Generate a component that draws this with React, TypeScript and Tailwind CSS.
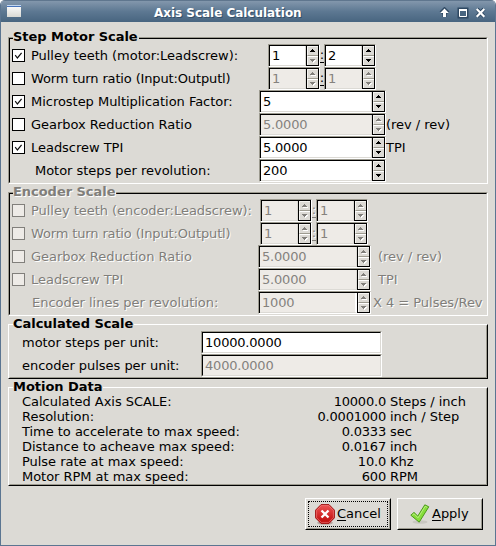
import React from "react";

type SpinProps = { value: string; off?: boolean; up?: boolean; down?: boolean; className: string; strip?: boolean };

function Arrow({ dir, off }: { dir: "up" | "down"; off: boolean }) {
  const d = dir === "up" ? "M2 0h1v1h1v1h1v1h-5v-1h1v-1h1z" : "M0 0h5v1h-1v1h-1v1h-1v-1h-1v-1h-1z";
  return (
    <svg width="6" height="4" viewBox="0 0 6 4" shapeRendering="crispEdges">
      {off && <path d={d} fill="#ffffff" transform="translate(1 1)" />}
      <path d={d} fill={off ? "#807e7a" : "#000000"} />
    </svg>
  );
}

function Spin({ value, off = false, up = !off, down = !off, className, strip = false }: SpinProps) {
  return (
    <div className={`h-[23px] shrink-0 border border-t-[#9c9a8f] border-l-[#9c9a8f] border-r-white border-b-white ${className}`}>
      <div className={`flex h-[21px] border-t border-l border-t-black border-l-black ${off ? "bg-[#eeebe7]" : "bg-white"}`}>
        <div
          className={`flex-1 border-b border-b-[#dcdad5] pl-[2px] leading-[19px] tracking-[-0.2px] ${strip ? "border-r-2 border-r-white" : "border-r border-r-[#dcdad5]"} ${off ? "text-[#85827e]" : "text-black"}`}
        >
          {value}
        </div>
        <div className="flex h-[20px] w-[13px] flex-col border-r border-b border-l border-black bg-[#dcdad5]">
          <div className="flex h-[10px] items-center justify-center border-t border-l border-b border-t-[#f5f4f1] border-l-[#f5f4f1] border-b-[#9c9a8f]">
            <Arrow dir="up" off={!up} />
          </div>
          <div className="flex h-[9px] items-center justify-center border-t border-l border-t-white border-l-[#f5f4f1]">
            <Arrow dir="down" off={!down} />
          </div>
        </div>
      </div>
    </div>
  );
}

function Check({ state }: { state: "on" | "none" | "off" }) {
  return (
    <div className={`mr-[6px] h-[13px] w-[13px] shrink-0 border ${state === "off" ? "border-[#817f7b] bg-[#eeebe7]" : "border-black bg-white"}`}>
      {state === "on" && (
        <svg width="11" height="11" viewBox="0 0 11 11">
          <path d="M2.2 5.2 L4.4 8 L8.6 2.8" fill="none" stroke="#111" strokeWidth="1.2" />
        </svg>
      )}
    </div>
  );
}

function Label({ children, className }: { children: React.ReactNode; className: string }) {
  return <div className={`shrink-0 whitespace-nowrap ${className}`}>{children}</div>;
}

function Frame({ title, sunken, off, className, children }: { title: string; sunken?: boolean; off?: boolean; className: string; children: React.ReactNode }) {
  return (
    <section
      className={`mx-[7px] shrink-0 border ${sunken ? "border-t-[#9c9a8f] border-l-[#9c9a8f] border-r-white border-b-white" : "border-t-white border-l-white border-r-black border-b-black"} ${className}`}
    >
      <div
        className={`h-full border ${sunken ? "border-t-black border-l-black border-r-[#dcdad5] border-b-[#dcdad5]" : "border-t-[#dcdad5] border-l-[#dcdad5] border-r-[#9c9a8f] border-b-[#9c9a8f]"}`}
      >
        <h2 className={`mt-[-9px] ml-[3px] h-[14px] w-fit bg-[#dcdad5] pr-px leading-[14px] font-bold tracking-[-0.04px] whitespace-nowrap ${off ? "text-[#807e7a] [text-shadow:1px_1px_white]" : ""}`}>
          {title}
        </h2>
        {children}
      </div>
    </section>
  );
}

function Row({ children }: { children: React.ReactNode }) {
  return <div className="flex h-[23px] items-center pl-[2px]">{children}</div>;
}

function Colon() {
  return <div className="flex h-[15px] w-[4px] shrink-0 justify-center overflow-hidden border-b border-current leading-[13px]">:</div>;
}

function MotionRow({ name, value, unit }: { name: string; value: string; unit: string }) {
  return (
    <div className="flex h-[15px] leading-[15px] whitespace-nowrap">
      <div className="w-[250px] pl-[12px]">{name}</div>
      <div className="w-[126px] text-right tracking-[-0.2px]">{value}</div>
      <div className="ml-[4px]">{unit}</div>
    </div>
  );
}

export default function App() {
  return (
    <div className="h-[546px] w-[496px] overflow-hidden bg-white font-['DejaVu_Sans',sans-serif] text-[13px] tracking-[-0.03px] text-black">
      <div className="flex h-full flex-col overflow-hidden rounded-t-[5px] border-x border-b border-[#5b7591] bg-[#dcdad5]">
        <header className="flex h-[22px] shrink-0 items-center border-t border-t-[#5f768e] bg-linear-to-b from-[#8397ac] via-[#5d7892] to-[#486580] pr-[9px] pl-[6px]">
          <svg className="-mt-px" width="14" height="12" viewBox="0 0 14 12" shapeRendering="crispEdges">
            <defs>
              <linearGradient id="win" x1="0" y1="0" x2="0" y2="1">
                <stop offset="0" stopColor="#fff" />
                <stop offset="1" stopColor="#d9d9d4" />
              </linearGradient>
            </defs>
            <path fill="url(#win)" d="M0 0h14v12h-14z" />
            <path fill="#c2d6ef" d="M0 0h14v1h-14z" />
            <path fill="#4773b9" d="M0 1h14v1h-14z" />
          </svg>
          <div className="mt-[3px] ml-[133px] w-[177px] text-[12px] leading-[16px] font-bold whitespace-nowrap text-white [text-shadow:1px_1px_#344f69]">
            Axis Scale Calculation
          </div>
          <svg className="mt-[2px] ml-auto" width="48" height="12" viewBox="0 0 48 12">
            <g fill="none" stroke="#2f4963" strokeWidth="4">
              <path d="M6.5 10V4M3 6l3.5-3.5L10 6M21.5 2.5h7v7h-7zM39 2l7 7.5M46 2l-7 7.5" />
            </g>
            <path d="M6.5 1.5L10.8 6H8v4H5V6H2.2z" fill="white" />
            <path d="M21.5 2.5h7v7h-7z" fill="#486580" stroke="white" strokeWidth="1" />
            <path d="M21 2h8v2h-8z" fill="white" />
            <path d="M38.7 2l7.6 7.8M46.3 2l-7.6 7.8" stroke="white" strokeWidth="2.2" />
          </svg>
        </header>

        <Frame title="Step Motor Scale" sunken className="mt-[15px] h-[147px]">
          <Row><Check state="on" /><Label className="w-[237px]">Pulley teeth (motor:Leadscrew):</Label><Spin value="1" down={false} className="w-[52px]" /><Colon /><Spin value="2" className="w-[52px]" /></Row>
          <Row><Check state="none" /><Label className="w-[237px] tracking-[-0.14px]">Worm turn ratio (Input:Outputl)</Label><Spin value="1" off className="w-[52px]" /><Colon /><Spin value="1" off className="w-[52px]" /></Row>
          <Row><Check state="on" /><Label className="w-[228px]">Microstep Multiplication Factor:</Label><Spin value="5" className="w-[127px]" /></Row>
          <Row><Check state="none" /><Label className="w-[228px]">Gearbox Reduction Ratio</Label><Spin value="5.0000" off className="w-[127px]" /><Label className="">(rev / rev)</Label></Row>
          <Row><Check state="on" /><Label className="w-[228px]">Leadscrew TPI</Label><Spin value="5.0000" className="w-[127px]" /><Label className="">TPI</Label></Row>
          <Row><Label className="ml-[23px] w-[224px]">Motor steps per revolution:</Label><Spin value="200" className="w-[127px]" /></Row>
        </Frame>

        <Frame title="Encoder Scale" sunken off className="mt-[8px] h-[124px]">
          <div className="text-[#807e7a] [text-shadow:1px_1px_white]">
            <Row><Check state="off" /><Label className="w-[229px]">Pulley teeth (encoder:Leadscrew):</Label><Spin value="1" off className="w-[52px] [text-shadow:none]" /><Colon /><Spin value="1" off className="w-[52px] [text-shadow:none]" /></Row>
            <Row><Check state="off" /><Label className="w-[229px] tracking-[-0.14px]">Worm turn ratio (Input:Outputl)</Label><Spin value="1" off className="w-[52px] [text-shadow:none]" /><Colon /><Spin value="1" off className="w-[52px] [text-shadow:none]" /></Row>
            <Row><Check state="off" /><Label className="w-[227px]">Gearbox Reduction Ratio</Label><Spin value="5.0000" off className="w-[113px] [text-shadow:none]" /><Label className="ml-[7px]">(rev / rev)</Label></Row>
            <Row><Check state="off" /><Label className="w-[227px]">Leadscrew TPI</Label><Spin value="5.0000" off className="w-[113px] [text-shadow:none]" /><Label className="ml-[7px]">TPI</Label></Row>
            <Row><Label className="ml-[20px] w-[226px]">Encoder lines per revolution:</Label><Spin value="1000" off strip className="w-[113px] [text-shadow:none]" /><Label className="ml-[2px]">X 4 = Pulses/Rev</Label></Row>
          </div>
        </Frame>

        <Frame title="Calculated Scale" className="mt-[8px] h-[55px]">
          <Row>
            <Label className="ml-[10px] w-[179px]">motor steps per unit:</Label>
            <div className="h-[23px] w-[181px] border border-t-[#9c9a8f] border-l-[#9c9a8f] border-r-white border-b-white">
              <div className="h-[21px] border border-t-black border-l-black border-r-[#dcdad5] border-b-[#dcdad5] bg-white pl-[2px] leading-[19px] tracking-[-0.2px]">10000.0000</div>
            </div>
          </Row>
          <Row>
            <Label className="ml-[10px] w-[179px]">encoder pulses per unit:</Label>
            <div className="h-[23px] w-[181px] border border-t-[#9c9a8f] border-l-[#9c9a8f] border-r-white border-b-white">
              <div className="h-[21px] border border-t-black border-l-black border-r-[#dcdad5] border-b-[#dcdad5] bg-[#eeebe7] pl-[2px] leading-[19px] tracking-[-0.2px] text-[#85827e]">4000.0000</div>
            </div>
          </Row>
        </Frame>

        <Frame title="Motion Data" className="mt-[8px] h-[99px]">
          <MotionRow name="Calculated Axis SCALE:" value="10000.0" unit="Steps / inch" />
          <MotionRow name="Resolution:" value="0.0001000" unit="inch / Step" />
          <MotionRow name="Time to accelerate to max speed:" value="0.0333" unit="sec" />
          <MotionRow name="Distance to acheave max speed:" value="0.0167" unit="inch" />
          <MotionRow name="Pulse rate at max speed:" value="10.0" unit="Khz" />
          <MotionRow name="Motor RPM at max speed:" value="600" unit="RPM" />
        </Frame>

        <footer className="mt-[12px] flex justify-end gap-[6px] pr-[12px]">
          <button className="h-[32px] w-[86px] border border-t-white border-l-white border-r-black border-b-black">
            <span className="flex h-[30px] border border-t-[#dcdad5] border-l-[#dcdad5] border-r-[#9c9a8f] border-b-[#9c9a8f] p-px">
              <span className="flex flex-1 items-center border border-dotted border-black pl-[6px]">
                <svg width="20" height="21" viewBox="0 0 20 21">
                  <defs>
                    <linearGradient id="red" x1="0" y1="0" x2="0" y2="1">
                      <stop offset="0" stopColor="#ee5555" />
                      <stop offset="1" stopColor="#bd0808" />
                    </linearGradient>
                  </defs>
                  <ellipse cx="10" cy="18.8" rx="8" ry="2" fill="#b5a5a0" />
                  <path d="M6 .6h8l5.4 5.5v7.8L14 19.4H6L.6 13.9V6.1z" fill="url(#red)" stroke="#a31515" />
                  <path d="M6.4 1.6h7.2l4.8 4.9v7L13.6 18.4H6.4L1.6 13.5v-7z" fill="none" stroke="#f08080" strokeWidth=".6" />
                  <path d="M6.5 6.5l7 7M13.5 6.5l-7 7" stroke="white" strokeWidth="2.3" />
                </svg>
                <span className="ml-[2px]"><span className="underline underline-offset-2">C</span>ancel</span>
              </span>
            </span>
          </button>
          <button className="h-[32px] w-[86px] border border-t-white border-l-white border-r-black border-b-black">
            <span className="flex h-[30px] items-center border border-t-[#dcdad5] border-l-[#dcdad5] border-r-[#9c9a8f] border-b-[#9c9a8f] pl-[11px]">
              <svg width="20" height="20" viewBox="0 0 20 20">
                <ellipse cx="10" cy="18" rx="7.5" ry="1.8" fill="#c9c7c1" />
                <path d="M.8 11.2L4 8.4l3.8 3.7L14.8.8l4 2L9.2 18.2z" fill="#86dd3a" stroke="#4d9a1c" strokeLinejoin="round" />
                <path d="M2.3 11.2L4 9.8l4 4L15.2 2.3l2 1" fill="none" stroke="#c4f28f" strokeWidth=".8" />
              </svg>
              <span className="ml-[2px]"><span className="underline underline-offset-2">A</span>pply</span>
            </span>
          </button>
        </footer>
      </div>
    </div>
  );
}
